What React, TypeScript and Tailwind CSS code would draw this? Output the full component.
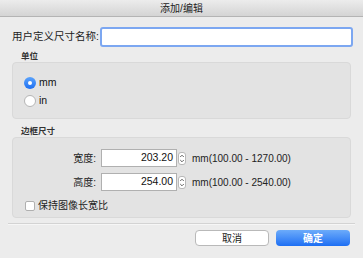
import React, { useState } from 'react'

const font = { fontFamily: '"Liberation Sans","Noto Sans CJK SC",sans-serif' }

const Stepper = () => (
  <div className="w-[8px] h-[13px] rounded-[3px] border border-[#b8b8b8] bg-white flex items-center justify-center">
    <svg width="6" height="11" viewBox="0 0 6 11">
      <path d="M1.2 4 L3 2.2 L4.8 4" fill="none" stroke="#555" strokeWidth="0.9" />
      <path d="M1.2 7 L3 8.8 L4.8 7" fill="none" stroke="#555" strokeWidth="0.9" />
    </svg>
  </div>
)

const SizeRow = ({ label, value, range }: { label: string; value: string; range: string }) => (
  <div className="flex items-center h-[18px]">
    <div className="w-[83px] text-right text-[10px] text-[#222]">{label}</div>
    <div className="ml-[5px] w-[76px] h-[18px] bg-white border border-[#b0b0b0] flex items-center justify-end pr-[3px] text-[10.5px] text-[#111]">
      {value}
    </div>
    <div className="ml-[1px]">
      <Stepper />
    </div>
    <div className="ml-[6px] text-[10px] text-[#222]">{range}</div>
  </div>
)

const App = () => {
  const [unit, setUnit] = useState('mm')
  const [keep, setKeep] = useState(false)
  return (
    <div className="w-[363px] h-[258px] bg-[#ececec] flex flex-col overflow-hidden" style={font}>
      <div className="h-[17px] shrink-0 bg-gradient-to-b from-[#ececec] to-[#d4d4d4] border-b border-[#b4b4b4] flex items-center justify-center text-[10px] text-[#222]">
        添加/编辑
      </div>

      <div className="flex items-center mt-[10px] h-[20px]">
        <div className="ml-[12px] w-[86px] text-[10.5px] text-[#222] whitespace-nowrap">用户定义尺寸名称:</div>
        <div className="ml-[2px] w-[253px] h-[20px] rounded-[3px] border-2 border-[#7ca7f1] bg-white"></div>
      </div>

      <div className="ml-[21px] mt-[4px] h-[11px] text-[8.5px] font-bold text-[#333] leading-[11px]">单位</div>
      <div className="ml-[12px] w-[339px] h-[57px] rounded-[4px] bg-[#e3e3e3] border border-[#d9d9d9] flex flex-col pt-[14px] pl-[11px] gap-[6px]">
        <div className="flex items-center h-[12px] cursor-pointer" onClick={() => setUnit('mm')}>
          {unit === 'mm' ? (
            <div className="w-[12px] h-[12px] rounded-full bg-gradient-to-b from-[#5aa2fb] to-[#1d6ff2] flex items-center justify-center">
              <div className="w-[4px] h-[4px] rounded-full bg-white"></div>
            </div>
          ) : (
            <div className="w-[12px] h-[12px] rounded-full bg-white border border-[#b5b5b5]"></div>
          )}
          <span className="ml-[3px] text-[10.5px] text-[#111]">mm</span>
        </div>
        <div className="flex items-center h-[12px] cursor-pointer" onClick={() => setUnit('in')}>
          {unit === 'in' ? (
            <div className="w-[12px] h-[12px] rounded-full bg-gradient-to-b from-[#5aa2fb] to-[#1d6ff2] flex items-center justify-center">
              <div className="w-[4px] h-[4px] rounded-full bg-white"></div>
            </div>
          ) : (
            <div className="w-[12px] h-[12px] rounded-full bg-white border border-[#b5b5b5]"></div>
          )}
          <span className="ml-[3px] text-[10.5px] text-[#111]">in</span>
        </div>
      </div>

      <div className="ml-[21px] mt-[7px] h-[11px] text-[8.5px] font-bold text-[#333] leading-[11px]">边框尺寸</div>
      <div className="ml-[12px] w-[339px] h-[81px] rounded-[4px] bg-[#e3e3e3] border border-[#d9d9d9] flex flex-col pt-[11px] gap-[6px]">
        <SizeRow label="宽度:" value="203.20" range="mm(100.00 - 1270.00)" />
        <SizeRow label="高度:" value="254.00" range="mm(100.00 - 2540.00)" />
        <div className="flex items-center ml-[12px] mt-[1px] cursor-pointer" onClick={() => setKeep(!keep)}>
          <div className="w-[10px] h-[10px] rounded-[2px] bg-white border border-[#b0b0b0]">
            {keep && (
              <svg width="8" height="8" viewBox="0 0 8 8">
                <path d="M1.5 4 L3.3 6 L6.5 1.8" fill="none" stroke="#222" strokeWidth="1.2" />
              </svg>
            )}
          </div>
          <span className="ml-[3px] text-[10px] text-[#222]">保持图像长宽比</span>
        </div>
      </div>

      <div className="mt-[5px] ml-[8px] w-[347px] h-[2px] border-t border-[#d3d3d3] border-b border-b-[#f6f6f6]"></div>

      <div className="flex justify-end gap-[7px] mt-[5px] pr-[13px]">
        <button className="w-[74px] h-[16px] rounded-[4px] bg-white border border-[#b9b9b9] text-[10px] text-[#222] flex items-center justify-center">
          取消
        </button>
        <button className="w-[74px] h-[16px] rounded-[4px] bg-gradient-to-b from-[#6cabfa] to-[#1c6ef3] text-[10px] font-bold text-white flex items-center justify-center">
          确定
        </button>
      </div>
    </div>
  )
}

export default App
